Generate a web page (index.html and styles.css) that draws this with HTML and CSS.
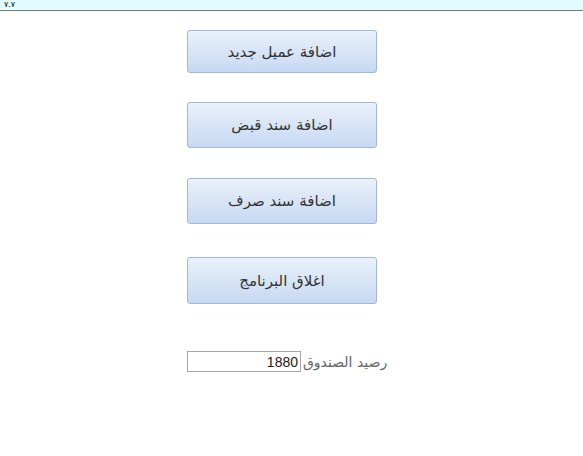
FILE: index.html
```html
<!DOCTYPE html>
<html lang="ar">
<head>
  <meta charset="UTF-8">
  <title>القائمة الرئيسية</title>
  <link rel="stylesheet" href="styles.css">
</head>
<body>
  <!-- top strip -->
  <div id="topBar"><span class="top-text">٧.٧</span></div>

  <div id="menu">
    <button class="menu-btn btn-a">اضافة عميل جديد</button>
    <button class="menu-btn btn-b">اضافة سند قبض</button>
    <button class="menu-btn btn-c">اضافة سند صرف</button>
    <button class="menu-btn btn-d">اغلاق البرنامج</button>

    <div class="balance">
      <input type="text" id="boxBalance" value="1880">
      <label for="boxBalance">رصيد الصندوق</label>
    </div>
  </div>
</body>
</html>
```

FILE: styles.css
```css
body {
  margin: 0;
  background: #fff;
  font-family: "DejaVu Sans", Tahoma, sans-serif;
  color: #333;
}
#topBar {
  height: 10px;
  background: #e2fbfc;
  border-bottom: 1px solid #6f7f7f;
  overflow: hidden;
  padding-left: 4px;
}
.top-text {
  display: block;
  font-size: 8px;
  line-height: 10px;
  color: #000;
}
#menu {
  margin-left: 187px;
  width: 205px;
  overflow: hidden;
  display: flex;
  flex-direction: column;
  align-items: flex-start;
  padding-top: 19px;
}
.menu-btn {
  width: 190px;
  border: 1px solid #a2b8d6;
  border-radius: 3px;
  background: linear-gradient(#eaf1fb, #c6d9f2);
  font-family: "DejaVu Sans", Tahoma, sans-serif;
  font-size: 15px;
  color: #333;
  direction: rtl;
  padding: 0;
  cursor: pointer;
}
.btn-a { height: 43px; margin-bottom: 29px; }
.btn-b { height: 46px; margin-bottom: 30px; }
.btn-c { height: 46px; margin-bottom: 33px; }
.btn-d { height: 47px; margin-bottom: 47px; }
.balance {
  display: flex;
  align-items: center;
  white-space: nowrap;
  gap: 2px;
}
.balance label {
  direction: rtl;
  font-size: 14px;
  color: #666;
}
.balance input {
  width: 108px;
  height: 15px;
  border: 1px solid #a5a5a5;
  padding: 2px;
  font-family: "Liberation Sans", Arial, sans-serif;
  font-size: 14px;
  text-align: right;
  color: #222;
  margin: 0;
}
```
